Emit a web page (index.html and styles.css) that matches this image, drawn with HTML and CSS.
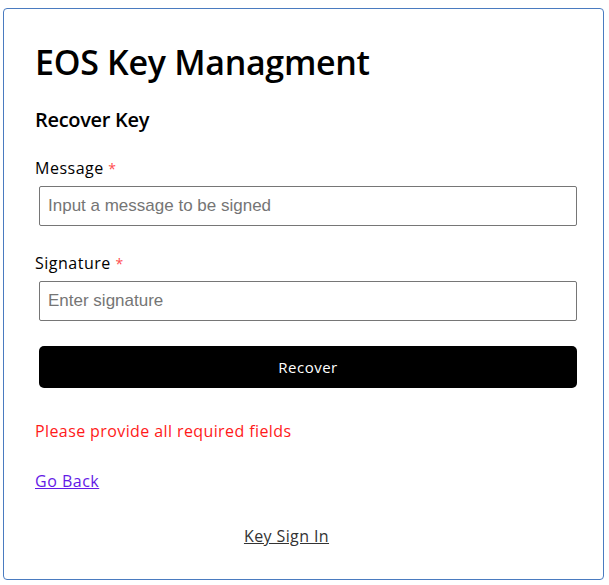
FILE: index.html
```html
<!DOCTYPE html>
<html lang="en">
<head>
<meta charset="utf-8">
<title>EOS Key Managment</title>
<link rel="stylesheet" href="styles.css">
</head>
<body>
<div class="card">
  <h1 class="title">EOS Key Managment</h1>
  <h2 class="subtitle">Recover Key</h2>
  <form class="form" onsubmit="return false">
    <div class="field">
      <label class="label" for="msg">Message <span class="req">*</span></label>
      <input class="input" id="msg" type="text" placeholder="Input a message to be signed">
    </div>
    <div class="field">
      <label class="label" for="sig">Signature <span class="req">*</span></label>
      <input class="input" id="sig" type="text" placeholder="Enter signature">
    </div>
    <button class="btn" type="submit">Recover</button>
  </form>
  <p class="error">Please provide all required fields</p>
  <a class="back" href="#">Go Back</a>
  <div class="footer"><a class="signin" href="#">Key Sign In</a></div>
</div>
</body>
</html>
```
FILE: styles.css
```css
html, body {
  margin: 0;
  padding: 0;
  background: #fff;
}
body {
  font-family: "Open Sans", "Noto Sans", sans-serif;
  color: #000;
}
.card {
  box-sizing: border-box;
  width: 601px;
  height: 572px;
  margin: 8px 0 0 3px;
  border: 1px solid #4a7bc0;
  border-radius: 4px;
  padding: 22px 25px 0 31px;
  display: flex;
  flex-direction: column;
}
.title {
  margin: 0;
  font-size: 34px;
  font-weight: 600;
  line-height: 62px;
  letter-spacing: -0.3px;
}
.subtitle {
  margin: 14px 0 0;
  font-size: 20px;
  font-weight: 600;
  line-height: 26px;
  letter-spacing: -0.3px;
}
.form {
  display: flex;
  flex-direction: column;
  margin-top: 24px;
}
.field {
  display: flex;
  flex-direction: column;
}
.field + .field {
  margin-top: 26px;
}
.label {
  font-size: 16px;
  line-height: 22px;
  height: 22px;
  margin-bottom: 7px;
  letter-spacing: 0.5px;
}
.req {
  color: #ff4d4f;
  font-size: 14px;
}
.input {
  box-sizing: border-box;
  margin-left: 4px;
  width: 538px;
  height: 40px;
  border: 1px solid #767676;
  border-radius: 2px;
  padding: 0 8px;
  font-family: "Liberation Sans", Arial, sans-serif;
  font-size: 17px;
  color: #000;
  outline: none;
}
.input::placeholder {
  color: #757575;
}
.btn {
  box-sizing: border-box;
  margin: 25px 0 0 4px;
  width: 538px;
  height: 42px;
  border: none;
  border-radius: 5px;
  background: #000;
  color: #fff;
  font-family: "Open Sans", "Noto Sans", sans-serif;
  font-size: 15px;
  letter-spacing: 0.5px;
  cursor: pointer;
}
.error {
  margin: 32px 0 0;
  color: #ff1a1a;
  font-size: 16px;
  line-height: 22px;
  letter-spacing: 0.4px;
}
.back {
  align-self: flex-start;
  margin-top: 28px;
  color: #6419e6;
  font-size: 16px;
  line-height: 22px;
  letter-spacing: 0.5px;
}
.footer {
  margin-top: 33px;
  padding-right: 40px;
  text-align: center;
  font-size: 16px;
  line-height: 22px;
  letter-spacing: 0.4px;
}
.signin {
  color: #333;
}
```
